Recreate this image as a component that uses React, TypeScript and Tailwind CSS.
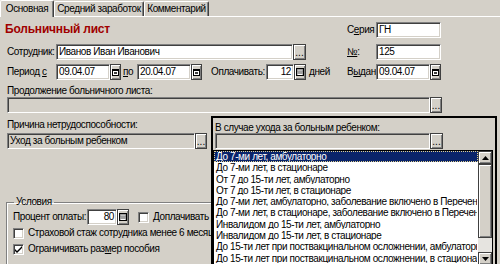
import React from 'react';
import clsx from 'clsx';

const sunken =
  'border border-t-[#808080] border-l-[#808080] border-b-white border-r-white shadow-[inset_1px_1px_0_#404040,inset_-1px_-1px_0_#d4d0c8]';
const raised = 'border border-[#404040] shadow-[inset_1px_1px_0_#ffffff,inset_-1px_-1px_0_#808080]';

const Field: React.FC<{ w: string; gray?: boolean; right?: boolean; children?: React.ReactNode }> = ({
  w,
  gray,
  right,
  children,
}) => (
  <div
    className={clsx(
      'h-[16px] shrink-0 px-[2px] leading-[14px] whitespace-nowrap overflow-hidden',
      sunken,
      w,
      gray ? 'bg-[#d4d0c8]' : 'bg-white',
      right && 'text-right'
    )}
  >
    {children}
  </div>
);

const DotsButton: React.FC<{ w?: string }> = ({ w = 'w-[13px]' }) => (
  <div className={clsx('h-[16px] shrink-0 bg-[#d4d0c8] flex items-end justify-center', raised, w)}>
    <span className="leading-[9px] pb-[2px] tracking-[0px]">...</span>
  </div>
);

const DateButton = () => (
  <div className={clsx('h-[16px] w-[11px] shrink-0 bg-[#d4d0c8] flex items-center justify-center', raised)}>
    <svg width="7" height="7" viewBox="0 0 7 7">
      <rect x="0.5" y="0.5" width="6" height="6" fill="#fff" stroke="#000" />
      <rect x="0" y="0" width="7" height="2" fill="#000" />
      <rect x="2" y="3" width="3" height="2" fill="#404040" />
    </svg>
  </div>
);

const CalcButton: React.FC<{ h?: string }> = ({ h = 'h-[16px]' }) => (
  <div className={clsx('w-[12px] shrink-0 bg-[#d4d0c8] flex items-center justify-center', raised, h)}>
    <svg width="8" height="8" viewBox="0 0 8 8">
      <rect x="0.5" y="0.5" width="7" height="7" fill="#808080" stroke="#000" />
      <rect x="1.5" y="1.5" width="5" height="2" fill="#c0c0c0" />
      <rect x="1.5" y="4.5" width="1" height="1" fill="#fff" />
      <rect x="3.5" y="4.5" width="1" height="1" fill="#fff" />
      <rect x="5.5" y="4.5" width="1" height="1" fill="#fff" />
      <rect x="1.5" y="6" width="5" height="1" fill="#fff" />
    </svg>
  </div>
);

const DateField: React.FC<{ value: string }> = ({ value }) => (
  <div className="flex shrink-0">
    <Field w="w-[54px]">{value}</Field>
    <DateButton />
  </div>
);

const Checkbox: React.FC<{ checked?: boolean }> = ({ checked }) => (
  <div className={clsx('w-[11px] h-[11px] shrink-0 bg-white flex items-center justify-center', sunken)}>
    {checked && (
      <svg width="7" height="7" viewBox="0 0 7 7">
        <path d="M0 3 L2 5 L7 0 L7 2 L2 7 L0 5 Z" fill="#000" />
      </svg>
    )}
  </div>
);

const reasons = [
  'До 7-ми лет, амбулаторно',
  'До 7-ми лет, в стационаре',
  'От 7 до 15-ти лет, амбулаторно',
  'От 7 до 15-ти лет, в стационаре',
  'До 7-ми лет, амбулаторно, заболевание включено в Перечень',
  'До 7-ми лет, в стационаре, заболевание включено в Перечень',
  'Инвалидом до 15-ти лет, амбулаторно',
  'Инвалидом до 15-ти лет, в стационаре',
  'До 15-ти лет при поствакцинальном осложнении, амбулаторно',
  'До 15-ти лет при поствакцинальном осложнении, в стационаре',
];

const tab =
  'flex items-center justify-center border-t border-l border-white border-r border-r-[#404040] shadow-[inset_-1px_0_0_#808080] rounded-t-[2px] bg-[#d4d0c8]';

export default function App() {
  return (
    <div className="relative w-[500px] h-[264px] overflow-hidden bg-[#d4d0c8] text-black text-[10px] leading-[12px] tracking-[-0.4px] font-['Liberation_Sans',Arial,sans-serif]">
      {/* вкладки */}
      <div className="flex h-[17px] items-end border-b border-white">
        <div className={clsx(tab, 'relative z-10 -mb-px h-[17px] w-[54px]')}>Основная</div>
        <div className={clsx(tab, 'h-[15px] w-[90px]')}>Средний заработок</div>
        <div className={clsx(tab, 'h-[15px] w-[65px]')}>Комментарий</div>
      </div>

      {/* шапка */}
      <div className="mt-[5px] flex h-[16px] items-center">
        <div className="w-[347px] pl-[5px] self-start text-[12px] leading-[14px] font-bold tracking-[-0.2px] text-[#a00000]">
          Больничный лист
        </div>
        <span className="w-[29px]">
          С<u>е</u>рия
        </span>
        <Field w="w-[65px]">ГН</Field>
      </div>

      <div className="mt-[6px] flex h-[16px] items-center">
        <div className="w-[347px] pl-[7px] flex items-center">
          <span className="w-[49px]">Сотрудник:</span>
          <Field w="w-[237px]">Иванов Иван Иванович</Field>
          <DotsButton />
        </div>
        <span className="w-[29px]">
          <u>№</u>:
        </span>
        <Field w="w-[65px]">125</Field>
      </div>

      <div className="mt-[4px] flex h-[16px] items-center">
        <div className="w-[347px] pl-[7px] flex items-center">
          <span className="w-[49px]">
            Период <u>с</u>
          </span>
          <DateField value="09.04.07" />
          <span className="w-[16px] pl-[2px]">
            <u>п</u>о
          </span>
          <DateField value="20.04.07" />
          <span className="ml-[9px] w-[55px]">Оплачивать:</span>
          <Field w="w-[28px]" right>
            12
          </Field>
          <CalcButton />
          <span className="ml-[3px]">дней</span>
        </div>
        <span className="w-[29px]">
          В<u>ы</u>дан
        </span>
        <DateField value="09.04.07" />
      </div>

      {/* продолжение */}
      <div className="mt-[5px] pl-[7px] h-[11px] leading-[11px]">Продолжение больничного листа:</div>
      <div className="mt-[1px] pl-[7px] flex">
        <Field w="w-[423px]" gray />
        <DotsButton w="w-[12px]" />
      </div>

      {/* причина */}
      <div className="mt-[6px] pl-[7px] h-[11px] leading-[11px]">Причина нетрудоспособности:</div>
      <div className="mt-[3px] pl-[7px] flex">
        <Field w="w-[188px]" gray>
          Уход за больным ребенком
        </Field>
        <DotsButton w="w-[12px]" />
      </div>

      {/* условия */}
      <fieldset className="mt-[47px] ml-[6px] w-[210px] h-[80px] border border-[#808080] shadow-[inset_1px_1px_0_#ffffff,1px_1px_0_#ffffff] px-[6px] pt-[2px]">
        <legend className="ml-[1px] px-[2px] leading-[12px]">Условия</legend>
        <div className="flex h-[14px] items-center">
          <span className="w-[74px]">Процент оплаты:</span>
          <Field w="w-[30px]" right>
            80
          </Field>
          <CalcButton />
          <div className="ml-[9px]">
            <Checkbox />
          </div>
          <span className="ml-[4px] whitespace-nowrap">Доплачивать д</span>
        </div>
        <div className="mt-[2px] flex h-[14px] items-center">
          <Checkbox />
          <span className="ml-[4px] whitespace-nowrap">Страховой стаж сотрудника менее 6 месяце</span>
        </div>
        <div className="mt-[2px] flex h-[14px] items-center">
          <Checkbox checked />
          <span className="ml-[4px] whitespace-nowrap">
            Ограничивать раз<u>м</u>ер пособия
          </span>
        </div>
      </fieldset>

      {/* выпадающий список */}
      <div className="absolute left-[211px] top-[116px] w-[286px] h-[152px] border-2 border-black bg-[#d4d0c8] flex flex-col">
        <div className="pl-[2px] pt-[4px] h-[15px] leading-[11px]">В случае ухода за больным ребенком:</div>
        <div className="pl-[2px] flex">
          <Field w="w-[215px]" gray />
          <DotsButton />
        </div>
        <div className="mt-[1px] mr-[2px] flex-1 grid grid-cols-[minmax(0,1fr)_14px] border border-black bg-white min-h-0">
          <div className="min-w-0 flex flex-col overflow-hidden">
            {reasons.map((r, i) => (
              <div
                key={r}
                className={clsx(
                  'w-full h-[11.3px] shrink-0 leading-[10px] px-[1px] whitespace-nowrap overflow-hidden',
                  i === 0 ? 'bg-[#0a246a] text-white border border-dotted border-[#e0d090]' : 'border border-transparent'
                )}
              >
                {r}
              </div>
            ))}
          </div>
          <div className="flex flex-col bg-[#e6e4e0] min-h-0">
            <div className={clsx('h-[13px] shrink-0 bg-[#d4d0c8] flex items-center justify-center', raised)}>
              <svg width="7" height="4" viewBox="0 0 7 4">
                <path d="M3.5 0 L7 4 L0 4 Z" fill="#000" />
              </svg>
            </div>
            <div className={clsx('h-[74px] shrink-0 bg-[#d4d0c8]', raised)} />
            <div className="flex-1" />
            <div className={clsx('h-[13px] shrink-0 bg-[#d4d0c8] flex items-center justify-center', raised)}>
              <svg width="7" height="4" viewBox="0 0 7 4">
                <path d="M0 0 L7 0 L3.5 4 Z" fill="#000" />
              </svg>
            </div>
          </div>
        </div>
      </div>
    </div>
  );
}
